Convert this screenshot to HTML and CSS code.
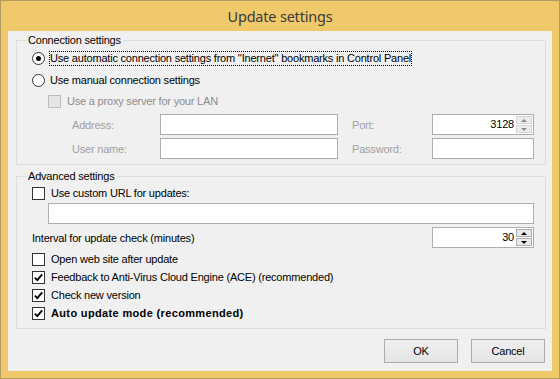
FILE: index.html
```html
<!DOCTYPE html>
<html lang="en">
<head>
    <meta charset="UTF-8">
    <title>Update settings</title>
    <link rel="stylesheet" href="styles.css">
</head>
<body>

<div class="window">
    <div class="titlebar">Update settings</div>

    <div class="client">
        <fieldset class="group">
            <legend>Connection settings</legend>
            <div class="group-body conn-body">
                <div class="opt-row radio-row">
                    <span class="radio checked"></span>
                    <span class="opt-label focused">Use automatic connection settings from ''Inernet'' bookmarks in Control Panel</span>
                </div>
                <div class="opt-row radio-row">
                    <span class="radio"></span>
                    <span class="opt-label">Use manual connection settings</span>
                </div>
                <div class="opt-row proxy-row disabled">
                    <span class="check"></span>
                    <span>Use a proxy server for your LAN</span>
                </div>

                <div class="proxy-grid disabled">
                    <span class="field-label">Address:</span>
                    <span class="edit"></span>
                    <span class="field-label port-label">Port:</span>
                    <span class="edit spin">
                        <span class="spin-value">3128</span>
                        <span class="spin-buttons">
                            <span class="spin-btn up"></span>
                            <span class="spin-btn down"></span>
                        </span>
                    </span>

                    <span class="field-label">User name:</span>
                    <span class="edit"></span>
                    <span class="field-label port-label">Password:</span>
                    <span class="edit"></span>
                </div>
            </div>
        </fieldset>

        <fieldset class="group group-adv">
            <legend>Advanced settings</legend>
            <div class="group-body adv-body">
                <div class="opt-row url-row">
                    <span class="check"></span>
                    <span>Use custom URL for updates:</span>
                </div>
                <div class="edit url-edit"></div>

                <div class="interval-row">
                    <span>Interval for update check (minutes)</span>
                    <span class="edit spin">
                        <span class="spin-value">30</span>
                        <span class="spin-buttons">
                            <span class="spin-btn up dark"></span>
                            <span class="spin-btn down dark"></span>
                        </span>
                    </span>
                </div>

                <div class="check-list">
                    <div class="opt-row">
                        <span class="check"></span>
                        <span>Open web site after update</span>
                    </div>
                    <div class="opt-row">
                        <span class="check">
                            <svg viewBox="0 0 11 11" width="11" height="11"><path d="M1.8 5.6 L4.3 8.1 L9.2 2.4" fill="none" stroke="#000" stroke-width="1.9"/></svg>
                        </span>
                        <span>Feedback to Anti-Virus Cloud Engine (ACE) (recommended)</span>
                    </div>
                    <div class="opt-row">
                        <span class="check">
                            <svg viewBox="0 0 11 11" width="11" height="11"><path d="M1.8 5.6 L4.3 8.1 L9.2 2.4" fill="none" stroke="#000" stroke-width="1.9"/></svg>
                        </span>
                        <span>Check new version</span>
                    </div>
                    <div class="opt-row">
                        <span class="check">
                            <svg viewBox="0 0 11 11" width="11" height="11"><path d="M1.8 5.6 L4.3 8.1 L9.2 2.4" fill="none" stroke="#000" stroke-width="1.9"/></svg>
                        </span>
                        <span class="strong">Auto update mode (recommended)</span>
                    </div>
                </div>
            </div>
        </fieldset>

        <div class="buttons">
            <button class="btn">OK</button>
            <button class="btn">Cancel</button>
        </div>
    </div>
</div>

</body>
</html>
```

FILE: styles.css
```css
body {
    margin: 0;
    font-family: "Liberation Sans", Arial, sans-serif;
    font-size: 11px;
    letter-spacing: -0.2px;
    color: #000;
    background-color: #f0c96b;
}
.window {
    width: 558px;
    height: 377px;
    border: 1px solid #b39a60;
    background-color: #f0c96b;
    display: flex;
    flex-direction: column;
}
.titlebar {
    height: 30px;
    display: flex;
    align-items: center;
    justify-content: center;
    font-family: "Noto Sans", sans-serif;
    font-size: 14.5px;
    letter-spacing: -0.2px;
    color: #3a3a3a;
}
.client {
    margin: 0 7px 0 7px;
    height: 340px;
    padding-top: 3px;
    box-sizing: border-box;
    background-color: #f0f0f0;
}
.group {
    margin: 0 6px 0 8px;
    padding: 0;
    border: 1px solid #dcdcdc;
    min-width: 0;
}
.group legend {
    margin-left: 9px;
    padding: 0 2px;
    line-height: 13px;
}
.group-adv {
    margin-top: 5px;
}
.group-body {
    padding: 0 11px 5px 15px;
}
.adv-body {
    padding-bottom: 6px;
}
.opt-row {
    display: flex;
    align-items: center;
    gap: 6px;
    height: 18px;
    white-space: nowrap;
}
.radio-row {
    height: 22px;
    gap: 4px;
}
.opt-label {
    border: 1px dotted transparent;
    line-height: 13px;
}
.opt-label.focused {
    border-color: #000;
}
.radio {
    width: 13px;
    height: 13px;
    box-sizing: border-box;
    border: 1px solid #333;
    border-radius: 50%;
    background-color: #fff;
    display: flex;
    align-items: center;
    justify-content: center;
    flex: none;
}
.radio.checked::after {
    content: "";
    width: 5px;
    height: 5px;
    border-radius: 50%;
    background-color: #000;
}
.check {
    width: 13px;
    height: 13px;
    box-sizing: border-box;
    border: 1px solid #333;
    background-color: #fff;
    display: flex;
    align-items: center;
    justify-content: center;
    flex: none;
}
.proxy-row {
    height: 20px;
    margin-left: 16px;
}
.disabled {
    color: #8d8d8d;
}
.disabled .check {
    border-color: #bcbcbc;
    background-color: #e6e6e6;
}
.proxy-grid {
    display: grid;
    grid-template-columns: 88px 178px 94px 102px;
    grid-auto-rows: 21px;
    row-gap: 3px;
    margin: 3px 0 0 40px;
    align-items: center;
}
.field-label {
    color: #a0a0a0;
}
.port-label {
    padding-left: 14px;
}
.edit {
    display: block;
    height: 21px;
    box-sizing: border-box;
    border: 1px solid #abadb3;
    background-color: #fff;
}
.spin {
    display: flex;
    align-items: stretch;
    padding: 1px;
}
.spin-value {
    flex: 1;
    text-align: right;
    line-height: 17px;
    padding-right: 2px;
    color: #000;
}
.spin-buttons {
    width: 16px;
    display: flex;
    flex-direction: column;
    gap: 1px;
}
.spin-btn {
    flex: 1;
    box-sizing: border-box;
    border: 1px solid #d4d4d4;
    background-color: #ececec;
    display: flex;
    align-items: center;
    justify-content: center;
}
.spin-btn::after {
    content: "";
    border-left: 3px solid transparent;
    border-right: 3px solid transparent;
}
.spin-btn.up::after {
    border-bottom: 3px solid #8a8a8a;
}
.spin-btn.down::after {
    border-top: 3px solid #8a8a8a;
}
.spin-btn.dark {
    border-color: #acacac;
    background-color: #e8e8e8;
}
.spin-btn.up.dark::after {
    border-bottom-color: #000;
}
.spin-btn.down.dark::after {
    border-top-color: #000;
}
.url-row {
    height: 20px;
}
.url-edit {
    margin-left: 16px;
}
.interval-row {
    display: flex;
    justify-content: space-between;
    align-items: center;
    margin-top: 3px;
}
.interval-row .spin {
    width: 102px;
}
.check-list {
    margin-top: 2px;
}
.strong {
    font-weight: bold;
    letter-spacing: 0.35px;
}
.buttons {
    display: flex;
    justify-content: flex-end;
    gap: 13px;
    margin: 10px 7px 0 0;
}
.btn {
    width: 74px;
    height: 24px;
    border: 1px solid #acacac;
    background: linear-gradient(#f0f0f0, #e5e5e5);
    font-family: "Liberation Sans", Arial, sans-serif;
    font-size: 11px;
    letter-spacing: -0.2px;
    color: #000;
    padding: 0;
}
```
